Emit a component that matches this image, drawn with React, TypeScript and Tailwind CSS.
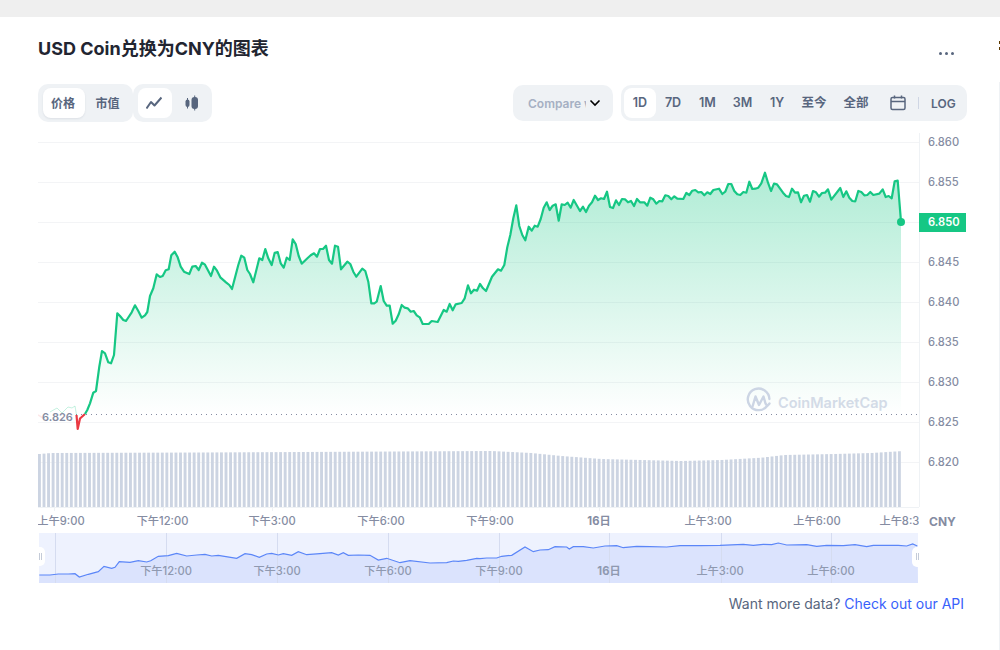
import React from "react";

const FONT = 'Inter, "Noto Sans CJK SC", sans-serif';

// traced from the picture, [x, y] in 3x crops
const fromCrop = (pts: number[][], ox: number, oy: number) =>
  pts.map(([x, y]) => [ox + x / 3, oy + y / 3]);

const lineA = [[75,552],[82,540],[90,520],[100,488],[108,483],[118,410],[126,363],[135,370],[145,397],[153,400],[162,375],[172,250],[180,258],[190,270],[198,273],[215,247],[225,226],[235,243],[245,263],[255,256],[262,246],[270,198],[280,175],[290,133],[300,141],[308,138],[317,121],[326,118],[334,76],[344,65],[353,82],[362,110],[372,125],[388,132],[397,110],[407,108],[416,120],[426,98],[435,104],[453,138],[462,110],[471,122],[481,142],[498,157],[508,165],[516,177],[535,105],[544,77],[553,83],[562,120],[570,132],[580,157],[598,85],[607,90],[616,57],[625,85],[635,105],[644,68],[653,66],[662,100],[671,113],[680,83],[689,90],[698,28],[707,42],[716,78],[725,101],[743,84],[752,76],[762,70],[771,80],[780,57],[789,57],[798,47],[807,90],[816,101],[825,47],[834,50],[843,118],[862,95],[871,102],[880,125],[889,140],[907,116],[916,123],[925,155],[934,220],[943,220],[950,215]];
const lineB = [[32,378],[41,423],[50,437],[59,437],[68,491],[77,482],[86,463],[95,435],[104,443],[113,445],[122,455],[131,453],[140,466],[149,472],[158,492],[176,492],[185,483],[203,486],[221,450],[230,455],[239,432],[248,451],[257,433],[275,429],[284,415],[294,376],[303,400],[312,389],[321,392],[330,372],[339,385],[348,393],[366,350],[384,328],[393,332],[403,315],[412,262],[421,225],[430,175],[439,136],[448,198],[457,225],[466,241],[476,200],[485,212],[494,197],[503,200],[512,177],[521,143],[530,127],[539,150],[548,137],[557,133],[566,182],[575,133],[584,135],[593,128],[602,143],[611,120],[630,153],[639,140],[648,156],[657,137],[666,127],[675,107],[684,120],[693,115],[702,117],[711,95],[720,141],[729,144],[738,121],[747,135],[756,117],[765,118],[774,127],[783,123],[792,138],[801,117]];
const lineC = [[0,127],[13,127],[22,137],[31,113],[40,118],[49,131],[58,123],[67,124],[76,106],[85,108],[94,118],[103,109],[112,116],[130,117],[139,99],[148,105],[157,92],[166,90],[175,97],[184,96],[193,106],[202,97],[211,102],[220,90],[237,86],[247,102],[256,95],[265,72],[274,72],[283,93],[292,103],[301,105],[310,96],[319,98],[328,65],[337,87],[346,86],[355,83],[364,70],[375,38],[384,68],[393,93],[402,71],[411,73],[429,98],[438,108],[447,111],[456,86],[465,98],[474,97],[483,127],[492,107],[501,105],[510,125],[519,93],[528,97],[537,110],[546,99],[555,98],[564,88],[574,119],[601,84],[610,111],[619,94],[628,113],[637,123],[646,124],[655,93],[664,96],[673,106],[682,105],[691,96],[700,105],[718,101],[728,88],[737,111],[746,108],[755,115],[764,64],[773,62],[783,185]];

const price = [
  ...fromCrop(lineA, 60, 230),
  ...fromCrop(lineB, 370, 160),
  ...fromCrop(lineC, 640, 160),
];

const miniA = [[28,135],[60,135],[85,132],[115,132],[135,131],[148,141],[175,133],[205,125],[222,109],[245,115],[255,112],[268,95],[300,97],[325,92],[350,96],[362,92],[385,79],[415,77],[440,70],[470,78],[500,75],[525,73],[545,78],[565,76],[620,85],[645,71],[665,74],[688,82],[710,72],[725,70],[745,75],[760,71],[785,76],[805,65],[830,74],[870,71],[905,68],[925,75],[940,68],[955,76],[985,75],[1020,76],[1045,90],[1070,85],[1110,98],[1140,92],[1200,99],[1250,98],[1270,93],[1285,94],[1310,91],[1340,85]];
const miniB = [[0,86],[20,84],[50,84],[65,79],[95,76],[135,51],[160,65],[180,60],[205,59],[225,50],[260,51],[268,57],[280,50],[310,50],[340,54],[375,48],[410,47],[430,53],[470,49],[510,50],[560,51],[600,47],[660,47],[720,46],[790,43],[820,46],[850,43],[875,44],[895,39],[920,45],[980,44],[1010,49],[1040,46],[1090,47],[1125,44],[1160,50],[1180,46],[1255,46],[1280,48],[1298,42],[1312,48]];
const mini = [...fromCrop(miniA, 30, 530), ...fromCrop(miniB, 480, 530)];

const toPoints = (pts: number[][]) => pts.map(([x, y]) => `${x.toFixed(1)},${y.toFixed(1)}`).join(" ");

const priceLabels = ["6.860", "6.855", "", "6.845", "6.840", "6.835", "6.830", "6.825", "6.820"];
const gridY = [142, 182, 222, 262, 302, 342, 382, 422, 462];

const volumeStops = [[38,454],[50,453],[200,452.5],[300,452],[490,451],[530,453],[560,456],[600,459],[680,461],[720,460],[760,457.7],[783,455],[833,454],[870,453],[902,451]];
const volumeTop = (x: number) => {
  for (let i = 1; i < volumeStops.length; i++) {
    const [x0, y0] = volumeStops[i - 1];
    const [x1, y1] = volumeStops[i];
    if (x <= x1) return y0 + ((y1 - y0) * (x - x0)) / (x1 - x0);
  }
  return 451;
};
const volumeBars = Array.from({ length: 190 }, (_, i) => 38 + i * 4.55).filter((x) => x < 900);

const ticks = [54, 163, 272, 381, 490, 599, 708, 817];
const axisLabels = [
  { x: 61, t: "上午9:00" },
  { x: 162.5, t: "下午12:00" },
  { x: 272, t: "下午3:00" },
  { x: 381, t: "下午6:00" },
  { x: 490, t: "下午9:00" },
  { x: 599, t: "16日", bold: true },
  { x: 708, t: "上午3:00" },
  { x: 817, t: "上午6:00" },
  { x: 903, t: "上午8:30" },
];
const miniLabels = [
  { x: 166, t: "下午12:00" },
  { x: 277, t: "下午3:00" },
  { x: 388, t: "下午6:00" },
  { x: 499, t: "下午9:00" },
  { x: 609, t: "16日", bold: true },
  { x: 720, t: "上午3:00" },
  { x: 831, t: "上午6:00" },
];
const miniLines = [55, 166, 277, 388, 499, 609, 721, 831];

const ranges = [
  { t: "1D", w: "w-8", active: true },
  { t: "7D", w: "w-[34px]" },
  { t: "1M", w: "w-[35px]" },
  { t: "3M", w: "w-[35px]" },
  { t: "1Y", w: "w-[34px]" },
  { t: "至今", w: "w-[40px]" },
  { t: "全部", w: "w-[44px]" },
];

const MainChart = () => (
  <svg viewBox="38 132 962 400" className="block h-[400px] w-[962px]" style={{ fontFamily: FONT }}>
    <defs>
      <linearGradient id="area" gradientUnits="userSpaceOnUse" x1="0" y1="172" x2="0" y2="415">
        <stop offset="0" stopColor="#16c784" stopOpacity="0.34" />
        <stop offset="1" stopColor="#16c784" stopOpacity="0" />
      </linearGradient>
      <clipPath id="plot">
        <rect x="38" y="132" width="881" height="400" />
      </clipPath>
    </defs>

    {gridY.map((y) => (
      <line key={y} x1="38" x2="919" y1={y + 0.5} y2={y + 0.5} stroke="#f3f4f6" />
    ))}
    <line x1="919.5" x2="919.5" y1="133" y2="507" stroke="#eff2f5" />
    <line x1="38" x2="919" y1="507.5" y2="507.5" stroke="#eff2f5" />

    {volumeBars.map((x) => (
      <rect key={x} x={x} y={volumeTop(x)} width="2.9" height={507 - volumeTop(x)} fill="#ccd4e2" />
    ))}

    <polygon points={`85,415 ${toPoints(price)} 901,415`} fill="url(#area)" />
    <line x1="76" x2="919" y1="414.5" y2="414.5" stroke="#858ca2" strokeDasharray="1 4" />

    <polyline points="38,415 43,418" fill="none" stroke="#ea3943" strokeWidth="1.5" opacity="0.12" />
    <polyline points="50,412 57,408 62,413 68,407 72,408 75,406 76.5,415" fill="none" stroke="#16c784" strokeWidth="1" opacity="0.25" />
    <polyline points="76.5,415 77.7,429 80,418.5 85,414" fill="none" stroke="#ea3943" strokeWidth="2.2" strokeLinejoin="round" />
    <polyline points={toPoints(price)} fill="none" stroke="#16c784" strokeWidth="2.2" strokeLinejoin="round" />
    <circle cx="901" cy="222" r="4" fill="#16c784" />

    <text x="42" y="421" fontSize="11" fontWeight="600" fill="#858ca2">6.826</text>

    <g fill="none" stroke="#ccd5e4" strokeWidth="2.4" strokeLinecap="round" strokeLinejoin="round">
      <path d="M767.5 405.5A10.8 10.8 0 1 1 769.4 399" />
      <path d="M752.5 406.5L755.5 396.5L759 405L763.5 396.5L765.5 403.5Q767 407 769.5 403.5" />
    </g>
    <text x="778" y="407.5" fontSize="14.5" fontWeight="600" fill="#d3dbe7">CoinMarketCap</text>

    {priceLabels.map((label, i) =>
      label ? (
        <text key={label} x="928" y={gridY[i] + 4} fontSize="11.2" fontWeight="500" fill="#858ca2">
          {label}
        </text>
      ) : null
    )}
    <rect x="919" y="213" width="47" height="19" fill="#16c784" />
    <text x="928" y="226" fontSize="11.2" fontWeight="600" fill="#fff">6.850</text>

    {ticks.map((x) => (
      <line key={x} x1={x + 0.5} x2={x + 0.5} y1="507" y2="511" stroke="#eff2f5" />
    ))}
    <g clipPath="url(#plot)">
      {axisLabels.map((l) => (
        <text key={l.t} x={l.x} y="525" textAnchor="middle" fontSize="11.2" fontWeight={l.bold ? 700 : 500} fill="#858ca2">
          {l.t}
        </text>
      ))}
    </g>
    <text x="929" y="526" fontSize="12" fontWeight="700" fill="#858ca2">CNY</text>
  </svg>
);

const MiniMap = () => (
  <svg viewBox="38 533 890 50" className="block h-[50px] w-[890px]" style={{ fontFamily: FONT }}>
    <rect x="39" y="533" width="879" height="50" fill="#eef2fe" />
    <polygon points={`39,583 ${toPoints(mini)} 918,583`} fill="#dbe3fd" />
    {miniLines.map((x) => (
      <line key={x} x1={x + 0.5} x2={x + 0.5} y1="533" y2="583" stroke="#d5dcf0" />
    ))}
    <polyline points={toPoints(mini)} fill="none" stroke="#5b86f8" strokeWidth="1.2" />
    {miniLabels.map((l) => (
      <text key={l.t} x={l.x} y="575" textAnchor="middle" fontSize="11.2" fontWeight={l.bold ? 700 : 500} fill="#8f99b0">
        {l.t}
      </text>
    ))}
    <rect x="33" y="547" width="12" height="19" rx="5" fill="#fff" />
    <path d="M39.5 553v7M41.5 553v7" stroke="#c4cbd8" />
    <rect x="912" y="547" width="11" height="20" rx="5" fill="#fff" />
    <path d="M916.5 553v7M918.5 553v7" stroke="#c4cbd8" />
  </svg>
);

const App = () => {
  return (
    <div className="relative flex h-[650px] w-[1000px] flex-col overflow-hidden bg-white" style={{ fontFamily: FONT }}>
      <div className="h-[17px] bg-[#efefef]" />

      <div className="flex h-[67px] items-start justify-between pl-[38px] pr-[46px] pt-[20px]">
        <h2 className="text-[18px] font-bold leading-[23px] text-[#222531]">USD Coin兑换为CNY的图表</h2>
        <div className="mt-[15px] flex gap-[3px]">
          <span className="size-[3px] rounded-full bg-[#58667e]" />
          <span className="size-[3px] rounded-full bg-[#58667e]" />
          <span className="size-[3px] rounded-full bg-[#58667e]" />
        </div>
      </div>

      <div className="flex h-[48px] items-start pl-[38px] pr-[33px]">
        <div className="flex h-[38px] w-[95px] items-center rounded-[10px] bg-[#eff2f5] pl-[5px] text-[12px] font-semibold text-[#58667e]">
          <span className="flex h-[30px] w-[42px] items-center justify-center rounded-lg bg-white pr-[2px] pt-px shadow-[0_1px_2px_rgba(88,102,126,0.12)]">价格</span>
          <span className="flex h-[30px] w-[45px] items-center justify-center pt-px">市值</span>
        </div>
        <div className="flex h-[38px] w-[79px] items-center rounded-[10px] bg-[#eff2f5] pl-[5px]">
          <span className="flex h-[30px] w-[34px] items-center justify-center rounded-lg bg-white">
            <svg className="mr-[3px]" width="16" height="14" viewBox="0 0 16 14" fill="none" stroke="#58667e" strokeWidth="2" strokeLinejoin="round">
              <path d="M0.5 12.5L5 6L8.5 9.5L15.5 1.5" />
            </svg>
          </span>
          <span className="flex h-[30px] w-[38px] items-center justify-center">
            <svg width="13" height="16" viewBox="0 0 13 16" fill="#58667e">
              <rect x="0.5" y="4.5" width="4" height="7.5" rx="2" />
              <rect x="2" y="3" width="1" height="10.5" />
              <rect x="6.5" y="2" width="6.5" height="12" rx="3" />
              <rect x="9.2" y="0.5" width="1" height="15" />
            </svg>
          </span>
        </div>

        <div className="ml-auto mt-px flex h-[36px] w-[100px] items-center rounded-[10px] bg-[#eff2f5] pl-[15px]">
          <span className="w-[58px] overflow-hidden whitespace-nowrap pt-px text-[12px] font-semibold text-[#a6b0c3]">Compare with</span>
          <svg className="ml-[3px]" width="12" height="8" viewBox="0 0 12 8" fill="none" stroke="#000" strokeWidth="1.6">
            <path d="M1.5 1.5L6 6L10.5 1.5" />
          </svg>
        </div>

        <div className="ml-2 mt-px flex h-[36px] w-[346px] items-center rounded-[10px] bg-[#eff2f5] pl-[3px] text-[12.5px] font-semibold text-[#58667e]">
          {ranges.map((r) => (
            <span
              key={r.t}
              className={`flex h-[30px] items-center justify-center rounded-lg pt-px ${r.w} ${r.active ? "bg-white" : ""}`}
            >
              {r.t}
            </span>
          ))}
          <svg className="ml-[12px]" width="16" height="16" viewBox="0 0 16 16" fill="none" stroke="#58667e" strokeWidth="1.5">
            <rect x="1" y="2.5" width="14" height="12" rx="1.5" />
            <path d="M1 6.5h14M4.5 .5v3M11.5 .5v3" />
          </svg>
          <span className="ml-[12px] h-[12px] w-px bg-[#cfd6e4]" />
          <span className="ml-[12px] pt-px text-[12px]">LOG</span>
        </div>
      </div>

      <div className="pl-[38px]">
        <MainChart />
      </div>
      <div className="mt-px pl-[38px]">
        <MiniMap />
      </div>

      <p className="mt-[12px] pr-[36px] text-right text-[14px] leading-[17px] text-[#58667e]">
        Want more data? <a className="text-[#3861fb]">Check out our API</a>
      </p>

      <span className="absolute left-[999px] top-[41px] h-[3px] w-px bg-[#5c3a00]" />
      <span className="absolute left-[999px] top-[47px] h-[3px] w-px bg-[#5c3a00]" />
      <span className="absolute left-[999px] top-[82px] h-[568px] w-px bg-[#eff2f5]" />
    </div>
  );
};

export default App;
